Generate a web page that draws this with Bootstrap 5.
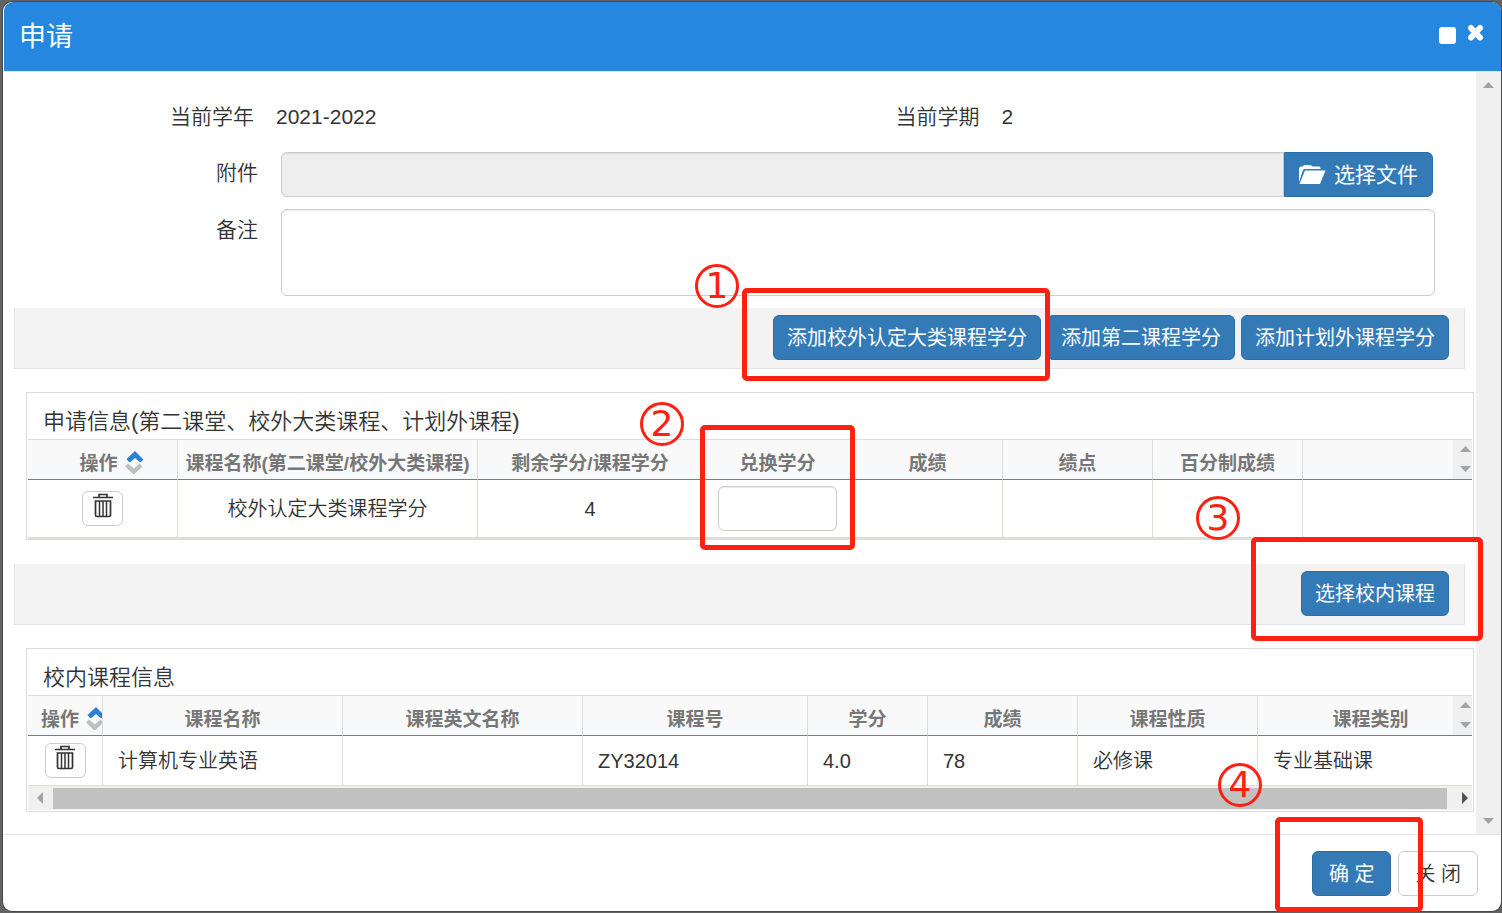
<!DOCTYPE html>
<html lang="zh-CN">
<head>
<meta charset="utf-8">
<meta name="viewport" content="width=device-width, initial-scale=1">
<title>申请</title>
<link href="https://cdn.jsdelivr.net/npm/bootstrap@5.3.0/dist/css/bootstrap.min.css" rel="stylesheet">
<style>
  :root { --mark: #ff2012; --rule: #ddd; --cell: #ddddd7; }
  body {
    font-family: "Liberation Sans", "Noto Sans CJK SC", sans-serif;
    font-size: 20px; line-height: 30px; font-weight: 350; color: #333;
    background: #636363; padding: 2px 1px 2px 3px;
  }
  .dialog-box { min-height: calc(100vh - 4px); background: #fff; border-radius: 9px; box-shadow: 0 0 0 1px #484848; padding-left: 1px; }
  .dialog-head { height: 70px; background: #2587df; color: #fff; border-bottom: 1px solid #e5e5e5; border-radius: 9px 9px 0 0; padding: 0 15px 0 15px; }
  .dialog-head h1 { font-size: 27px; line-height: 40px; font-weight: 400; }
  .head-btn { background: none; border: 0; padding: 0; color: #fff; line-height: 0; }
  .head-tools { padding-bottom: 5px; gap: 8px; }
  .dialog-main { padding: 30px 0 0 10px; min-width: 0; }
  .vbar { flex: 0 0 25px; background: #f0f0f0; padding: 10px 0; color: #a3a3a3; }

  /* form */
  .text-row, .form-area { font-size: 21px; }
  .text-row { margin: 0 11px 20px 0; }
  .tag { width: 240px; text-align: right; }
  .tag-value { padding-left: 22px; }
  .form-area { display: grid; grid-template-columns: 244px 1fr; gap: 12px 23px; margin: 0 41px 12px 0; }
  .form-area label { text-align: right; padding-top: 6px; }
  .field { border: 1px solid #ccc; border-radius: 6px; background: #fff; box-shadow: inset 0 1px 1px rgba(0,0,0,.075); width: 100%; display: block; }
  .file-field { height: 45px; background: #eee; border-radius: 6px 0 0 6px; }
  .file-group { padding-right: 2px; }
  .note-field { height: 87px; resize: none; }
  .btn { --bs-btn-font-size: 20px; --bs-btn-line-height: 30px; --bs-btn-padding-y: 5px; --bs-btn-padding-x: 13px; --bs-btn-border-radius: 6px; height: 45px; white-space: nowrap; }
  .btn-main { --bs-btn-color: #fff; --bs-btn-bg: #337ab7; --bs-btn-border-color: #2e6da4; --bs-btn-hover-color: #fff; --bs-btn-hover-bg: #286090; --bs-btn-hover-border-color: #204d74; --bs-btn-font-weight: 400; }
  .btn-plain { --bs-btn-color: #333; --bs-btn-bg: #fff; --bs-btn-border-color: #ccc; --bs-btn-hover-bg: #e6e6e6; --bs-btn-hover-border-color: #adadad; --bs-btn-font-weight: 350; }
  .file-btn { --bs-btn-font-size: 21px; --bs-btn-padding-x: 14px; border-radius: 0 6px 6px 0; }
  .tool-strip { height: 61px; background: #f3f3f3; border: solid #e5e5e5; border-width: 0 1px 1px; margin-right: 11px; padding: 7px 15px 0; gap: 6px; }

  /* grids */
  .sheet { border: 1px solid var(--rule); margin: 23px 2px 24px 12px; padding: 0 1px; }
  .sheet h2 { font-size: 22px; line-height: 34px; font-weight: 350; margin: 0; padding: 12px 15px 0; }
  .table.grid-tbl { border-collapse: separate; border-spacing: 0; table-layout: fixed; margin: 0; }
  .table.grid-tbl > :not(caption) > tr > * { padding: 0; border: solid var(--cell); border-width: 0 1px 0 0; box-shadow: none; vertical-align: middle; white-space: nowrap; color: #333; }
  .table.grid-tbl > :not(caption) > tr > :last-child { border-right: 0; }
  .table.grid-tbl > thead > tr > th { height: 41px; padding-top: 8px; background: #f9f9f9; color: #777; font-size: 19px; font-weight: 700; text-align: center; border-color: var(--rule) var(--rule) #428bca; border-width: 1px 1px 1px 0; overflow: hidden; }
  .table.grid-tbl > tbody > tr > td.lead-pad { padding-left: 15px; }
  .apply-tbl > tbody > tr { height: 57px; }
  .apply-tbl > tbody { text-align: center; }
  .apply-end { height: 2px; background: var(--cell); }
  .course-tbl > tbody > tr { height: 49px; }
  .table.course-tbl { width: calc(100% + 11px); }
  .sort-cell { gap: 7px; }
  .sort-cell svg { flex: none; margin-bottom: 3px; }
  .sort-wide { padding-left: 18px; }
  .sort-slim { padding-left: 13px; }
  .btn.del-btn { --bs-btn-padding-x: 0px; --bs-btn-padding-y: 1px; width: 41px; height: 35px; line-height: 0; display: inline-flex; justify-content: center; align-items: flex-start; }
  .mini-bar { top: 1px; right: 0; width: 19px; height: 39px; background: #f0f0f0; color: #a3a3a3; padding: 6px 0 7px 5px; z-index: 1; }
  .swap-field { width: 119px; height: 45px; }
  .hbar { height: 25px; background: #f0f0f0; border-top: 1px solid var(--cell); margin-bottom: 1px; }
  .hbar .knob { height: 21px; background: #c1c1c1; }
  .hbar svg { width: 25px; }

  .dialog-foot { border-top: 1px solid #e5e5e5; padding: 16px 23px 15px; gap: 7px; }
  .dialog-foot .btn { --bs-btn-padding-x: 16px; }

  /* numbered callouts laid over the controls */
  .ring-box { position: absolute; border: 5px solid var(--mark); border-radius: 5px; pointer-events: none; z-index: 5; }
  .ring-no { position: absolute; width: 44px; height: 44px; border: 3px solid var(--mark); border-radius: 50%; color: var(--mark); font: 400 36px/38px "DejaVu Sans", sans-serif; text-align: center; pointer-events: none; z-index: 5; }
  .box-1 { inset: -27px -9px -21px -31px; } .no-1 { left: -78px; top: -51px; }
  .box-2 { inset: -61px -18px -19px; }      .no-2 { left: -78px; top: -84px; }
  .box-3 { inset: -34px -34px -25px -50px; } .no-3 { left: -105px; top: -75px; }
  .box-4 { inset: -34px -32px -16px -37px; } .no-4 { left: -94px; top: -88px; }
</style>
</head>
<body>
<svg class="d-none">
  <symbol id="sort" viewBox="0 0 19 23">
    <path fill="#bfbfbf" d="M0 15.500 3 12.500 9 17.500 14.500 12.500 17.500 15.500 9.500 23H8z"/>
    <path fill="#2f7fd3" d="M1.500 8 10 0 18.500 8.500 16 11H14.500L10 7 5.500 11H4z"/>
  </symbol>
  <symbol id="bin" viewBox="0 0 20 25">
    <path fill="none" stroke="#333" stroke-width="1.700" d="M0 4.500H20M6 4V1.500H14V4M2.500 8H17.500V22Q17.500 23.500 16 23.500H4Q2.500 23.500 2.500 22Z"/>
    <path stroke="#333" stroke-width="1.500" d="M6.500 8V23M10 8V23M13.500 8V23"/>
  </symbol>
  <symbol id="up" viewBox="0 0 11 6"><path fill="currentColor" d="M0 6 5.500 0 11 6z"/></symbol>
  <symbol id="down" viewBox="0 0 11 6"><path fill="currentColor" d="M0 0H11L5.500 6z"/></symbol>
</svg>

<div class="dialog-box d-flex flex-column" role="dialog" aria-labelledby="dlg-title">
  <header class="dialog-head d-flex align-items-center justify-content-between">
    <h1 class="m-0" id="dlg-title">申请</h1>
    <div class="head-tools d-flex align-items-center">
      <button class="head-btn" type="button" aria-label="最大化"><svg width="20" height="24"><rect x="2" y="5" width="17" height="17" rx="3" fill="#fff"/></svg></button>
      <button class="head-btn" type="button" aria-label="关闭"><svg width="21" height="24" viewBox="0 0 21 24"><path d="M6 6 15 15.500M15 6 6 15.500" stroke="#fff" stroke-width="6" stroke-linecap="round"/></svg></button>
    </div>
  </header>

  <div class="d-flex flex-grow-1">
    <main class="dialog-main flex-grow-1">
      <div class="text-row d-flex">
        <div class="d-flex w-50"><div class="tag">当前学年</div><div class="tag-value">2021-2022</div></div>
        <div class="d-flex w-50"><div class="tag">当前学期</div><div class="tag-value">2</div></div>
      </div>

      <form class="form-area">
        <label for="file">附件</label>
        <div class="file-group d-flex">
          <input class="field file-field" id="file" type="text" readonly>
          <button class="btn btn-main file-btn d-flex align-items-center gap-2" type="button">
            <svg width="27" height="20" viewBox="0 0 27 20"><path fill="#fff" d="M0 17V3L1.500 1.500H4L5 0H12L13 1.500H20.500L21.500 3V4H5.500L4 5ZM6 5.500H26.500L21 19H.5Z"/></svg>
            选择文件
          </button>
        </div>
        <label for="note">备注</label>
        <textarea class="field note-field" id="note"></textarea>
      </form>

      <div class="tool-strip d-flex justify-content-end align-items-start">
        <div class="position-relative d-flex">
          <button class="btn btn-main" type="button">添加校外认定大类课程学分</button>
          <span class="ring-box box-1"></span><span class="ring-no no-1">1</span>
        </div>
        <button class="btn btn-main" type="button">添加第二课程学分</button>
        <button class="btn btn-main" type="button">添加计划外课程学分</button>
      </div>

      <section class="sheet">
        <h2>申请信息(第二课堂、校外大类课程、计划外课程)</h2>
        <div class="position-relative">
          <table class="table grid-tbl apply-tbl">
            <colgroup><col width="150"><col width="300"><col width="225"><col width="150"><col width="150"><col width="150"><col width="150"><col></colgroup>
            <thead><tr>
              <th><div class="sort-cell sort-wide d-flex align-items-center justify-content-center">操作<svg width="19" height="23"><use href="#sort"/></svg></div></th>
              <th>课程名称(第二课堂/校外大类课程)</th><th>剩余学分/课程学分</th><th>兑换学分</th><th>成绩</th><th>绩点</th><th>百分制成绩</th><th></th>
            </tr></thead>
            <tbody><tr>
              <td><button class="btn btn-plain del-btn" type="button" aria-label="删除"><svg width="20" height="25"><use href="#bin"/></svg></button></td>
              <td>校外认定大类课程学分</td><td>4</td>
              <td><div class="position-relative d-inline-block align-middle">
                <input class="field swap-field" type="text" aria-label="兑换学分">
                <span class="ring-box box-2"></span><span class="ring-no no-2">2</span>
              </div></td>
              <td></td><td></td><td></td><td></td>
            </tr></tbody>
          </table>
          <div class="mini-bar position-absolute d-flex flex-column justify-content-between align-items-center"><svg width="11" height="6"><use href="#up"/></svg><svg width="11" height="6"><use href="#down"/></svg></div>
        </div>
        <div class="apply-end"></div>
      </section>

      <div class="tool-strip d-flex justify-content-end align-items-start">
        <div class="position-relative d-flex">
          <button class="btn btn-main" type="button">选择校内课程</button>
          <span class="ring-box box-3"></span><span class="ring-no no-3">3</span>
        </div>
      </div>

      <section class="sheet mb-0">
        <h2>校内课程信息</h2>
        <div class="position-relative overflow-hidden">
          <table class="table grid-tbl course-tbl">
            <colgroup><col width="75"><col width="240"><col width="240"><col width="225"><col width="120"><col width="150"><col width="180"><col></colgroup>
            <thead><tr>
              <th><div class="sort-cell sort-slim d-flex align-items-center">操作<svg width="19" height="23"><use href="#sort"/></svg></div></th>
              <th>课程名称</th><th>课程英文名称</th><th>课程号</th><th>学分</th><th>成绩</th><th>课程性质</th><th>课程类别</th>
            </tr></thead>
            <tbody><tr>
              <td class="text-center"><button class="btn btn-plain del-btn" type="button" aria-label="删除"><svg width="20" height="25"><use href="#bin"/></svg></button></td>
              <td class="lead-pad">计算机专业英语</td><td></td><td class="lead-pad">ZY32014</td><td class="lead-pad">4.0</td><td class="lead-pad">78</td><td class="lead-pad">必修课</td><td class="lead-pad">专业基础课</td>
            </tr></tbody>
          </table>
          <div class="mini-bar position-absolute d-flex flex-column justify-content-between align-items-center"><svg width="11" height="6"><use href="#up"/></svg><svg width="11" height="6"><use href="#down"/></svg></div>
        </div>
        <div class="hbar d-flex align-items-center">
          <svg height="12" viewBox="0 0 25 12"><path fill="#a3a3a3" d="M15 0V12L9 6z"/></svg>
          <div class="knob flex-grow-1"></div>
          <svg height="12" viewBox="0 0 25 12"><path fill="#505050" d="M15 0V12L21 6z"/></svg>
        </div>
      </section>
    </main>
    <div class="vbar d-flex flex-column justify-content-between align-items-center"><svg width="11" height="6"><use href="#up"/></svg><svg width="11" height="6"><use href="#down"/></svg></div>
  </div>

  <footer class="dialog-foot d-flex justify-content-end">
    <div class="position-relative d-flex">
      <button class="btn btn-main" type="button">确 定</button>
      <span class="ring-box box-4"></span><span class="ring-no no-4">4</span>
    </div>
    <button class="btn btn-plain" type="button">关 闭</button>
  </footer>
</div>
<script src="https://cdn.jsdelivr.net/npm/bootstrap@5.3.0/dist/js/bootstrap.bundle.min.js"></script>
</body>
</html>
